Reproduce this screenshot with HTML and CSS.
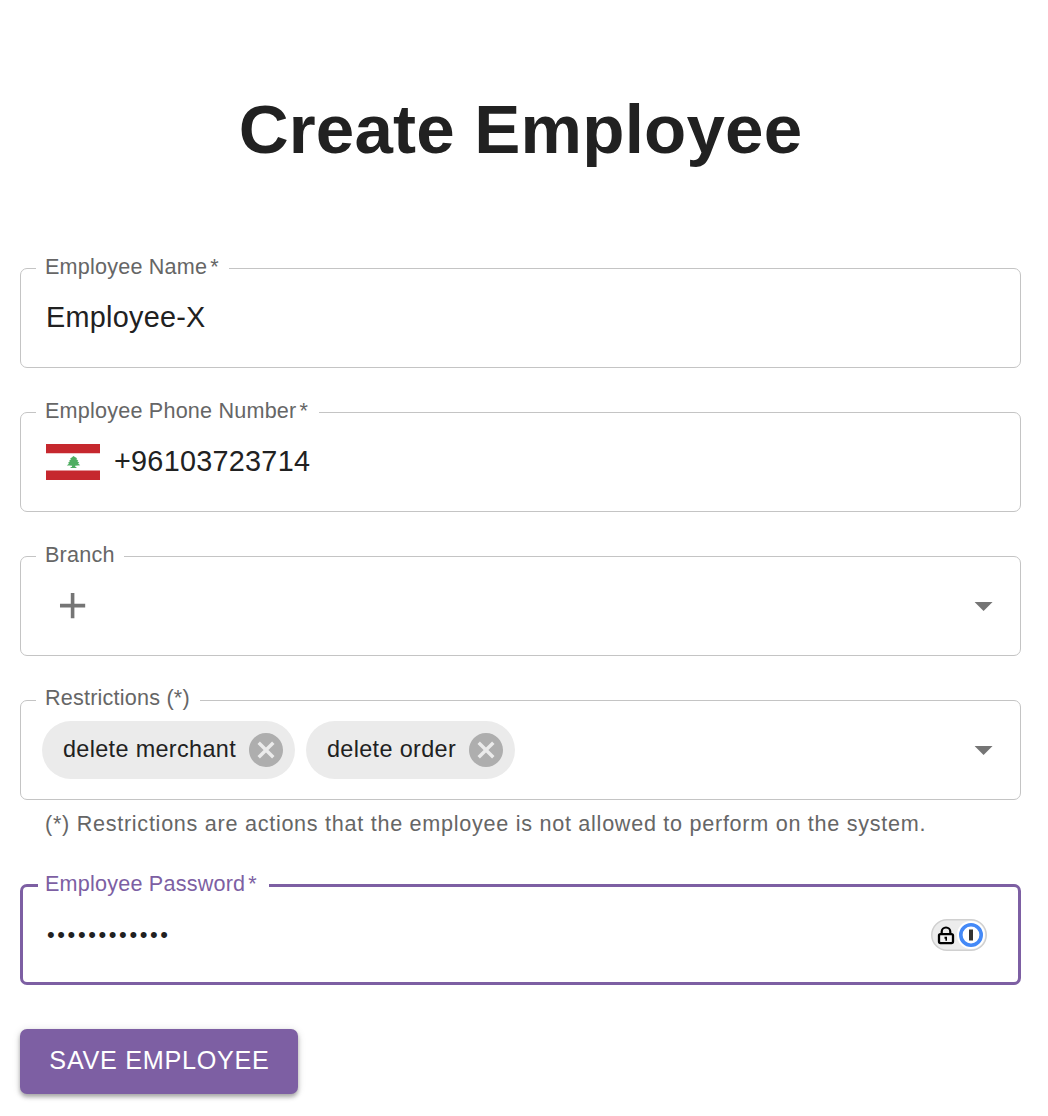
FILE: index.html
```html
<!DOCTYPE html>
<html lang="en">
<head>
<meta charset="utf-8">
<title>Create Employee</title>
<link rel="stylesheet" href="styles.css">
</head>
<body>
<main class="page">
  <h1 class="title">Create Employee</h1>
  <form class="form">
    <fieldset class="field">
      <legend class="label label-name">Employee Name<span class="star">*</span></legend>
      <div class="control"><span class="value">Employee-X</span></div>
    </fieldset>
    <fieldset class="field">
      <legend class="label label-phone">Employee Phone Number<span class="star">*</span></legend>
      <div class="control">
        <svg class="flag" viewBox="0 0 54 36" aria-hidden="true">
          <path fill="#fff" d="M0 0h54v36H0z"/>
          <path fill="#c6282e" d="M0 0h54v9.3H0zM0 26.5h54V36H0z"/>
          <path fill="#4fae62" d="M27.4 12l2 1.2 1.800 1.100-1 .7 2.200 1.700-1.200.4 2 1.700-1.200.4 2.200 2.100-2.500.1-2.600.3.300 1.300h1v1h-5.800v-1h1.200l.4-1.300-2.500-.2-2.900-.1 2.300-2-1.200-.4 2.100-1.700-1.100-.4 2.100-1.700-.9-.7 1.700-1.100z"/>
        </svg>
        <span class="value">+96103723714</span>
      </div>
    </fieldset>
    <fieldset class="field">
      <legend class="label label-branch">Branch</legend>
      <div class="control control-select">
        <svg class="plus" viewBox="0 0 24 24" aria-hidden="true"><path d="M19 13h-6v6h-2v-6H5v-2h6V5h2v6h6v2z"/></svg>
        <svg class="arrow" viewBox="0 0 24 24" aria-hidden="true"><path d="M7 10l5 5 5-5z"/></svg>
      </div>
    </fieldset>
    <fieldset class="field">
      <legend class="label label-restrictions">Restrictions (*)</legend>
      <div class="control control-chips">
        <span class="chip"><span class="chip-text">delete merchant</span>
          <svg class="remove" viewBox="2 2 20 20" aria-hidden="true"><path d="M12 2C6.470 2 2 6.470 2 12s4.470 10 10 10 10-4.470 10-10S17.530 2 12 2zm5 13.590L15.590 17 12 13.410 8.410 17 7 15.590 10.590 12 7 8.410 8.410 7 12 10.590 15.590 7 17 8.410 13.410 12 17 15.590z"/></svg>
        </span>
        <span class="chip"><span class="chip-text">delete order</span>
          <svg class="remove" viewBox="2 2 20 20" aria-hidden="true"><path d="M12 2C6.470 2 2 6.470 2 12s4.470 10 10 10 10-4.470 10-10S17.530 2 12 2zm5 13.590L15.590 17 12 13.410 8.410 17 7 15.590 10.590 12 7 8.410 8.410 7 12 10.590 15.590 7 17 8.410 13.410 12 17 15.590z"/></svg>
        </span>
        <svg class="arrow" viewBox="0 0 24 24" aria-hidden="true"><path d="M7 10l5 5 5-5z"/></svg>
      </div>
    </fieldset>
    <p class="helper">(*) Restrictions are actions that the employee is not allowed to perform on the system.</p>
    <fieldset class="field field-focused">
      <legend class="label label-password">Employee Password<span class="star">*</span></legend>
      <div class="control">
        <span class="value value-masked">••••••••••••</span>
        <svg class="manager" viewBox="0 0 56 32" aria-hidden="true">
          <rect x=".75" y=".75" width="54.500" height="30.500" rx="15.250" fill="#ececec" stroke="#d0d0d0" stroke-width="1.500"/>
          <circle cx="40" cy="16" r="14" fill="#fff"/>
          <circle cx="40" cy="16" r="10.200" fill="#fff" stroke="#4489f7" stroke-width="3.600"/>
          <rect x="38" y="10.500" width="4" height="11" fill="#333"/>
          <path d="M10.700 15v-2.200a4.300 4.300 0 0 1 8.600 0V15" fill="none" stroke="#000" stroke-width="2.200"/>
          <rect x="8" y="15.100" width="14" height="9" rx="1.500" fill="#f2f2f2" stroke="#000" stroke-width="2.300"/>
          <path d="M13.500 17.800h2.500v4h-1.600v-2h-.9z" fill="#000"/>
        </svg>
      </div>
    </fieldset>
    <button class="save" type="button">SAVE EMPLOYEE</button>
  </form>
</main>
</body>
</html>
```
FILE: styles.css
```css
* { box-sizing: border-box; }

body {
  margin: 0;
  background: #fff;
  color: #212121;
  font-family: "Liberation Sans", Arial, sans-serif;
}

.page { padding: 89px 27px 22px 20px; }

.title {
  margin: 0;
  height: 80px;
  font-size: 69.1px;
  line-height: 80px;
  letter-spacing: 0.2px;
  text-align: center;
}

.form {
  display: flex;
  flex-direction: column;
  align-items: stretch;
  gap: 32px;
  padding-top: 87px;
}

.field {
  min-width: 0;
  height: 112px;
  margin: 0;
  padding: 0 15px;
  border: 1px solid #c4c4c4;
  border-radius: 7px;
}

.label {
  height: 25px;
  padding: 0 0 0 9px;
  color: #666;
  font-size: 21.6px;
  line-height: 22px;
  letter-spacing: 0.2px;
  white-space: nowrap;
}

.star { margin-left: 3px; }
.label-name { width: 193px; }
.label-phone { width: 283px; }
.label-branch { width: 88px; }
.label-restrictions { width: 164px; line-height: 20px; }
.label-password { width: 231px; }

.control {
  display: flex;
  align-items: center;
  height: 74px;
  padding: 0 10px;
}

.value {
  padding-bottom: 2px;
  font-size: 28.8px;
  line-height: 34px;
  letter-spacing: 0.27px;
}

.value-masked {
  padding: 0 0 0 1px;
  font-size: 22px;
  letter-spacing: 2.6px;
}

.flag {
  width: 54px;
  height: 36px;
  margin-right: 14px;
}

.plus {
  width: 43.2px;
  height: 43.2px;
  margin-left: 5px;
  fill: #757575;
}

.control-select, .control-chips { padding-right: 0; }

.arrow {
  width: 43.2px;
  height: 43.2px;
  margin-left: auto;
  fill: #757575;
}

.control-chips {
  gap: 11px;
  padding-left: 6px;
}

.chip {
  display: flex;
  align-items: center;
  gap: 13px;
  height: 58px;
  padding: 0 12px 0 21px;
  border-radius: 29px;
  background: #ebebeb;
  font-size: 23.4px;
  letter-spacing: 0.35px;
  white-space: nowrap;
}

.chip-text { padding-bottom: 2px; }

.remove {
  width: 34px;
  height: 34px;
  fill: #aeaeae;
}

.helper {
  height: 30px;
  margin: -23px 0 2px;
  padding-left: 25px;
  color: #666;
  font-size: 21.6px;
  line-height: 30px;
  letter-spacing: 0.72px;
  white-space: nowrap;
}

.field-focused { border: 3px solid #7d5fa3; }

.field-focused .label {
  padding-left: 7px;
  color: #7d5fa3;
}

.field-focused .control { padding: 0 16px 0 8px; }

.manager {
  width: 56px;
  height: 32px;
  margin-left: auto;
}

.save {
  align-self: flex-start;
  width: 278px;
  height: 65px;
  margin-top: 12px;
  padding: 0 0 2px 1px;
  border: 0;
  border-radius: 7px;
  background: #7d5fa3;
  box-shadow: 0 3px 4px rgba(0, 0, 0, 0.3), 0 1px 8px rgba(0, 0, 0, 0.12);
  color: #fff;
  font-family: inherit;
  font-size: 25.2px;
  letter-spacing: 0.72px;
}
```
